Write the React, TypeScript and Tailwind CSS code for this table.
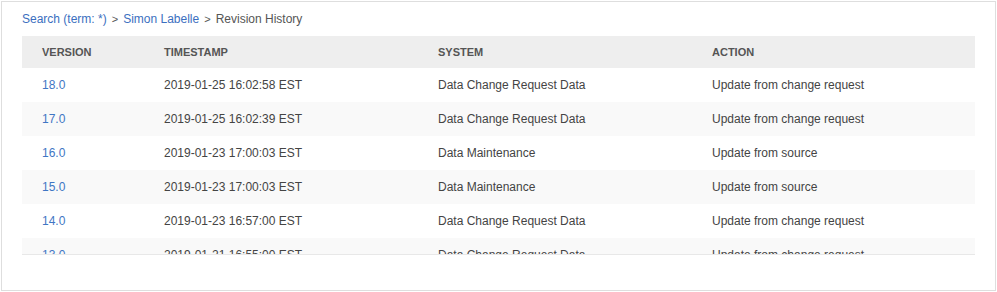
const rows = [
  { version: '18.0', ts: '2019-01-25 16:02:58 EST', system: 'Data Change Request Data', action: 'Update from change request' },
  { version: '17.0', ts: '2019-01-25 16:02:39 EST', system: 'Data Change Request Data', action: 'Update from change request' },
  { version: '16.0', ts: '2019-01-23 17:00:03 EST', system: 'Data Maintenance', action: 'Update from source' },
  { version: '15.0', ts: '2019-01-23 17:00:03 EST', system: 'Data Maintenance', action: 'Update from source' },
  { version: '14.0', ts: '2019-01-23 16:57:00 EST', system: 'Data Change Request Data', action: 'Update from change request' },
  { version: '13.0', ts: '2019-01-21 16:55:00 EST', system: 'Data Change Request Data', action: 'Update from change request' },
  { version: '12.0', ts: '2019-01-21 16:50:00 EST', system: 'Data Maintenance', action: 'Update from source' },
]

export default function App() {
  return (
    <div className="w-[997px] h-[292px] bg-white p-px font-['Liberation_Sans',Arial,sans-serif]">
      <div className="h-[290px] border border-[#dedede] bg-white px-[20px] pt-[10px]">
        <div className="flex items-center gap-[5px] text-[12px] leading-[15px] text-[#555]">
          <a className="text-[#3b6fc0]">Search (term: *)</a>
          <span className="text-[11px]">&gt;</span>
          <a className="text-[#3b6fc0]">Simon Labelle</a>
          <span className="text-[11px]">&gt;</span>
          <span>Revision History</span>
        </div>
        <div className="mt-[9px] h-[219px] overflow-hidden border-b border-[#e8e8e8]">
          <div className="grid grid-cols-[122px_274px_274px_282px] h-8 items-center bg-[#eeeeee] text-[11px] font-bold text-[#555]">
            <div className="pl-5">VERSION</div>
            <div className="pl-5">TIMESTAMP</div>
            <div className="pl-5">SYSTEM</div>
            <div className="pl-5">ACTION</div>
          </div>
          {rows.map((r, i) => (
            <div
              key={r.version}
              className={`grid grid-cols-[122px_274px_274px_282px] h-[34px] items-center text-[12px] text-[#444] ${i % 2 === 1 ? 'bg-[#f9f9f9]' : 'bg-white'}`}
            >
              <div className="pl-5 text-[#3f76c4]">{r.version}</div>
              <div className="pl-5">{r.ts}</div>
              <div className="pl-5">{r.system}</div>
              <div className="pl-5">{r.action}</div>
            </div>
          ))}
        </div>
      </div>
    </div>
  )
}
